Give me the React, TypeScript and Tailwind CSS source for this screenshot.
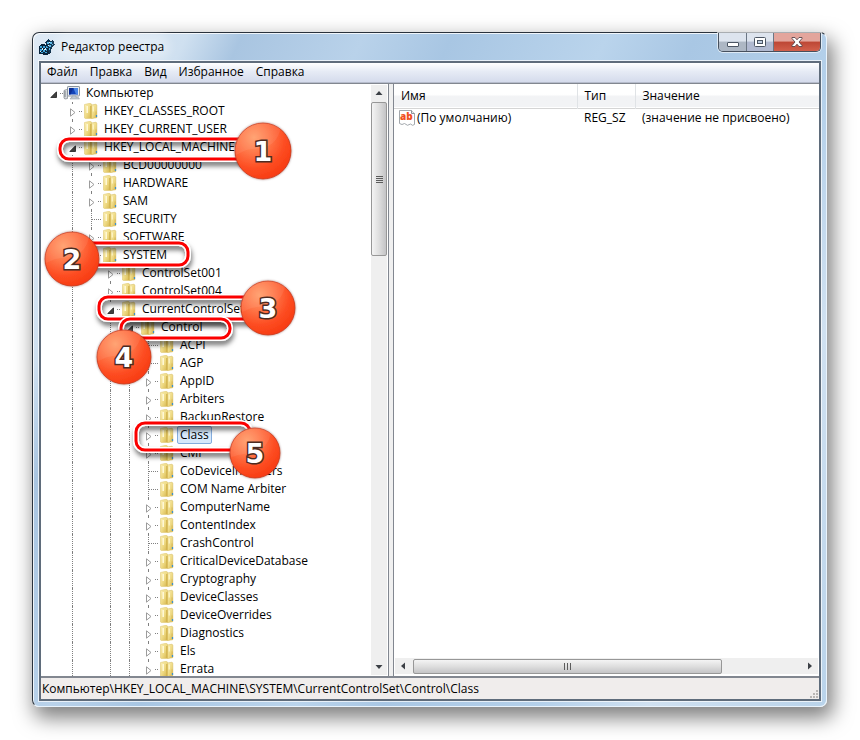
import { useState } from "react";
import clsx from "clsx";

type NodeState = "open" | "closed" | "leaf";

interface TreeNode {
  name: string;
  depth: number;
  state: NodeState;
}

const MENU = ["Файл", "Правка", "Вид", "Избранное", "Справка"];

// branches that still have siblings further down the tree, by depth
const GUIDES = [false, true, false, true, true];

const node = (depth: number, name: string, state: NodeState = "closed"): TreeNode => ({ depth, name, state });

const NODES: TreeNode[] = [
  node(0, "Компьютер", "open"),
  node(1, "HKEY_CLASSES_ROOT"),
  node(1, "HKEY_CURRENT_USER"),
  node(1, "HKEY_LOCAL_MACHINE", "open"),
  node(2, "BCD00000000"),
  node(2, "HARDWARE"),
  node(2, "SAM"),
  node(2, "SECURITY", "leaf"),
  node(2, "SOFTWARE"),
  node(2, "SYSTEM", "open"),
  node(3, "ControlSet001"),
  node(3, "ControlSet004"),
  node(3, "CurrentControlSet", "open"),
  node(4, "Control", "open"),
  node(5, "ACPI", "leaf"),
  node(5, "AGP", "leaf"),
  node(5, "AppID"),
  node(5, "Arbiters"),
  node(5, "BackupRestore"),
  node(5, "Class"),
  node(5, "CMF"),
  node(5, "CoDeviceInstallers", "leaf"),
  node(5, "COM Name Arbiter", "leaf"),
  node(5, "ComputerName"),
  node(5, "ContentIndex"),
  node(5, "CrashControl", "leaf"),
  node(5, "CriticalDeviceDatabase"),
  node(5, "Cryptography"),
  node(5, "DeviceClasses"),
  node(5, "DeviceOverrides"),
  node(5, "Diagnostics"),
  node(5, "Els"),
  node(5, "Errata"),
];

function RegeditIcon() {
  return (
    <svg width="16" height="16" viewBox="0 0 16 16" shapeRendering="crispEdges" aria-hidden="true">
      <path d="M0 7l3-2 6 1 3 2v6l-4 2-8-1z" fill="#08243c" />
      <path d="M1 7h2v2H1zM4 7h2v2H4zM7 7h2v2H7zM1 10h2v2H1zM4 11h2v2H4zM2 13h2v1H2zM6 13h2v1H6zM7 10h1v2H7z" fill="#3fa3d8" />
      <path d="M3 9h1v2H3zM6 9h1v2H6zM1 12h1v1H1zM5 10h1v1H5z" fill="#d6f1ff" />
      <path d="M6 3l4-3 1 2 3-1 1 2 1 3-3 2-1 4-2 2-1-5z" fill="#0b2f4d" />
      <path d="M8 3h2v2H8zM11 3h2v2h-2zM10 6h2v2h-2zM13 5h1v1h-1zM10 9h1v2h-1z" fill="#58b7e6" />
      <path d="M10 3h1v1h-1zM9 6h1v1H9z" fill="#e6f8ff" />
    </svg>
  );
}

function ComputerIcon() {
  return (
    <svg width="18" height="16" viewBox="0 0 18 16" className="-ml-px shrink-0" aria-hidden="true">
      <path d="M1 5.500l2.500-1 1 .5v8.500L2 14l-1-.8z" fill="#d7dadd" stroke="#7c8288" strokeWidth=".7" />
      <path d="M2 6v6" stroke="#7c8288" />
      <rect x="4.500" y="1.500" width="12" height="9.500" rx=".6" fill="#e8ecf0" stroke="#8c959e" />
      <rect x="6" y="3" width="9" height="6.500" fill="#1244b8" />
      <path d="M10.500 3H15v6.500h-2z" fill="#4a86e6" />
      <path d="M6 3h4.500L7.500 9.500H6z" fill="#0c2f96" />
      <path d="M9 11h4v1.500h2.500l1 1.500H7l1-1.500h1z" fill="#c3cbd2" stroke="#8b949d" strokeWidth=".5" />
    </svg>
  );
}

function FolderIcon() {
  return (
    <svg width="16" height="16" viewBox="0 0 16 16" className="shrink-0" aria-hidden="true">
      <defs>
        <linearGradient id="folder" x1="0" y1="0" x2="1" y2="1">
          <stop offset="0" stopColor="#fbf0b5" />
          <stop offset=".55" stopColor="#eed982" />
          <stop offset="1" stopColor="#d4b44c" />
        </linearGradient>
      </defs>
      <path d="M1.500 1.500L7 .3l1.500.7v14.500L2.200 15.500l-.7-.6z" fill="url(#folder)" stroke="#e0c976" strokeWidth=".6" />
      <path d="M8.500 2l4.500-.8.8.8v12.500l-5.300 1.200z" fill="url(#folder)" stroke="#d8bf66" strokeWidth=".6" />
      <path d="M7.200 3h1.300v12H7.200z" fill="#d3b34c" />
      <path d="M4.200 3v7" stroke="#fff9da" strokeWidth="1.500" />
      <path d="M10.300 3.500v5" stroke="#fdf4c8" strokeWidth="1.200" />
      <path d="M12.500 8.500h1.500V15l-1.500.3z" fill="#dcc062" />
      <path d="M13.500 12v2" stroke="#3a8fd0" strokeWidth="1.200" />
    </svg>
  );
}

function StringIcon() {
  return (
    <svg width="16" height="16" viewBox="0 0 16 16" className="shrink-0" aria-hidden="true">
      <path d="M.5.5h12l3 3v11l-2 .8-2-1.300-3 1.300-3-1.800-2.500 1-2.500-1z" fill="#fff" stroke="#a3a8ad" />
      <path d="M12.500.5v3h3" fill="#e6e8ea" stroke="#8d9399" />
      <text x="1" y="10" fontFamily="Open Sans, sans-serif" fontWeight="800" fontSize="10" fill="#f0501e">
        ab
      </text>
    </svg>
  );
}

function Expander({ state }: { state: NodeState }) {
  if (state === "open") {
    return (
      <svg width="7" height="7" viewBox="0 0 7 7" aria-hidden="true">
        <path d="M6.500.8v5.700H.8z" fill="#404040" stroke="#1e1e1e" strokeWidth=".8" />
      </svg>
    );
  }
  return (
    <svg width="6" height="9" viewBox="0 0 6 9" aria-hidden="true">
      <path d="M.5.8v7.400L5 4.500z" fill="#fff" stroke="#9c9c9c" />
    </svg>
  );
}

function TreeRow({ item, selected, onSelect }: { item: TreeNode; selected: boolean; onSelect: () => void }) {
  const { depth, name, state } = item;
  return (
    <li role="treeitem" aria-selected={selected} className="flex h-[18px] items-center">
      {GUIDES.slice(0, depth).map((line, i) => (
        <span key={i} className="flex h-full w-[19px] shrink-0 justify-center">
          {line && <span className="border-l border-dotted border-[#808080]" />}
        </span>
      ))}
      <span className="relative flex h-full w-[19px] shrink-0 items-center justify-center">
        {depth > 0 && <span className="absolute inset-y-0 left-[9px] border-l border-dotted border-[#808080]" />}
        <span className="absolute right-0 left-[10px] top-[9px] border-t border-dotted border-[#808080]" />
        {state !== "leaf" && (
          <button
            type="button"
            aria-label={name}
            className="relative flex h-[15px] w-[11px] items-center justify-center bg-white pt-0.5"
          >
            <Expander state={state} />
          </button>
        )}
      </span>
      <button
        type="button"
        onClick={onSelect}
        className="flex h-[18px] items-center whitespace-nowrap pl-px"
      >
        {depth === 0 ? <ComputerIcon /> : <FolderIcon />}
        <span
          className={clsx(
            "ml-0.5 rounded-xs border px-0.5 leading-4",
            selected ? "border-[#84acdd] bg-[#d6e8fb]" : "border-transparent"
          )}
        >
          {name}
        </span>
      </button>
    </li>
  );
}

function ScrollArrow({ direction }: { direction: "up" | "down" | "left" | "right" }) {
  const paths = {
    up: "M0.500 6L4 2l3.500 4z",
    down: "M0.500 2L4 6l3.500-4z",
    left: "M6 .5L2 4l4 3.500z",
    right: "M2 .5L6 4 2 7.500z",
  };
  return (
    <button type="button" aria-label={direction} className="flex size-4 shrink-0 items-center justify-center">
      <svg width="8" height="8" viewBox="0 0 8 8" aria-hidden="true">
        <path d={paths[direction]} fill="#3c4046" />
      </svg>
    </button>
  );
}

function RegistryTree() {
  const [selected, setSelected] = useState("Class");
  return (
    <div className="flex w-[348px] shrink-0 overflow-hidden border-r border-[#828790] bg-white">
      <ul role="tree" className="min-w-0 flex-1 overflow-hidden pl-[3px]">
        {NODES.map((n) => (
          <TreeRow key={n.name} item={n} selected={n.name === selected} onSelect={() => setSelected(n.name)} />
        ))}
      </ul>
      <div className="my-px mr-px flex w-4 flex-col bg-[#efefef]">
        <ScrollArrow direction="up" />
        <div className="mt-px flex h-[154px] flex-col items-center justify-center gap-px rounded-xs border border-[#979797] bg-linear-to-r from-[#f4f4f4] via-[#dedede] to-[#c4c4c6]">
          <span className="h-px w-[7px] bg-[#5c5c5c]" />
          <span className="h-px w-[7px] bg-[#5c5c5c]" />
          <span className="h-px w-[7px] bg-[#5c5c5c]" />
          <span className="h-px w-[7px] bg-[#5c5c5c]" />
        </div>
        <div className="mt-auto">
          <ScrollArrow direction="down" />
        </div>
      </div>
    </div>
  );
}

function Values() {
  return (
    <div className="flex min-w-0 flex-1 flex-col border-l border-[#828790] bg-white">
      <table className="w-full table-fixed text-left">
        <colgroup>
          <col className="w-[183px]" />
          <col className="w-[58px]" />
          <col />
        </colgroup>
        <thead>
          <tr className="h-6 border-b border-[#d5d5d5] bg-linear-to-b from-white from-45% to-[#f2f3f5] to-55%">
            <th className="border-r border-[#e0e3e6] pl-[7px] font-normal">Имя</th>
            <th className="border-r border-[#e0e3e6] pl-[7px] font-normal">Тип</th>
            <th className="pl-[7px] font-normal">Значение</th>
          </tr>
        </thead>
        <tbody>
          <tr className="h-5">
            <td className="pl-[5px]">
              <span className="flex items-center gap-0.5">
                <StringIcon />
                (По умолчанию)
              </span>
            </td>
            <td className="pl-[7px]">REG_SZ</td>
            <td className="pl-[7px]">(значение не присвоено)</td>
          </tr>
        </tbody>
      </table>
      <div className="mx-px mt-auto mb-0.5 flex h-4 items-center bg-[#efefef]">
        <ScrollArrow direction="left" />
        <div className="ml-0.5 flex h-[15px] w-[73%] items-center justify-center gap-0.5 rounded-xs border border-[#979797] bg-linear-to-b from-[#f4f4f4] via-[#dedede] to-[#c4c4c6]">
          <span className="h-[7px] w-px bg-[#5c5c5c]" />
          <span className="h-[7px] w-px bg-[#5c5c5c]" />
          <span className="h-[7px] w-px bg-[#5c5c5c]" />
        </div>
        <div className="ml-auto">
          <ScrollArrow direction="right" />
        </div>
      </div>
    </div>
  );
}

function TitleBar() {
  return (
    <header className="flex h-7 shrink-0 items-start justify-between">
      <div className="flex h-7 items-center gap-1.5">
        <RegeditIcon />
        <h1 className="rounded-full bg-white/30 shadow-[0_0_10px_6px_rgba(255,255,255,0.3)]">Редактор реестра</h1>
      </div>
      <div className="flex h-[19px] overflow-hidden rounded-b-[5px] border border-t-0 border-[#46505e] shadow-[0_0_0_1px_rgba(255,255,255,0.6)]">
        <button
          type="button"
          aria-label="Свернуть"
          className="flex w-7 items-end justify-center border-r border-[#6b7684] bg-linear-to-b from-[#dde4ee] from-45% to-[#adb7c4] to-50% pb-1"
        >
          <span className="h-[5px] w-3 rounded-[1px] border border-[#4b5563] bg-white" />
        </button>
        <button
          type="button"
          aria-label="Развернуть"
          className="flex w-[27px] items-center justify-center border-r border-[#6b7684] bg-linear-to-b from-[#dde4ee] from-45% to-[#b0b9d0] to-50%"
        >
          <svg width="12" height="10" viewBox="0 0 12 10" aria-hidden="true">
            <rect x=".5" y=".5" width="11" height="9" rx="1" fill="#fff" stroke="#4b5563" />
            <rect x="3.500" y="3.500" width="5" height="3" fill="#bccadd" stroke="#4b5563" />
          </svg>
        </button>
        <button
          type="button"
          aria-label="Закрыть"
          className="flex w-[46px] items-center justify-center bg-linear-to-b from-[#e3a59c] from-45% via-[#bd4735] via-50% to-[#d2604c]"
        >
          <svg width="12" height="10" viewBox="0 0 12 10" aria-hidden="true">
            <path
              d="M1 .5h3l2 2.300L8 .5h3v1L8 5l3 3.500v1H8L6 7.200 4 9.500H1v-1L4 5 1 1.500z"
              fill="#fff"
              stroke="#59434a"
              strokeWidth=".9"
            />
          </svg>
        </button>
      </div>
    </header>
  );
}

interface Step {
  label: string;
  cx: number;
  cy: number;
  r: number;
  box: [number, number, number, number];
}

const STEPS: Step[] = [
  { label: "1", cx: 263, cy: 151, r: 28, box: [60, 139, 200, 20] },
  { label: "2", cx: 72, cy: 259, r: 27, box: [70, 243, 118, 22] },
  { label: "3", cx: 268, cy: 308, r: 27, box: [99, 297, 160, 22] },
  { label: "4", cx: 124, cy: 357, r: 27, box: [121, 319, 109, 19] },
  { label: "5", cx: 255, cy: 453, r: 25, box: [136, 423, 114, 27] },
];

function Steps() {
  return (
    <svg width="340" height="500" viewBox="0 0 340 500" className="pointer-events-none absolute top-0 left-0">
      <defs>
        <radialGradient id="ball" cx=".34" cy=".26" r=".85">
          <stop offset="0" stopColor="#ff9d6a" />
          <stop offset=".3" stopColor="#ff7a4c" />
          <stop offset=".65" stopColor="#fd4d22" />
          <stop offset="1" stopColor="#f5350c" />
        </radialGradient>
        <filter id="frameShadow" x="-10%" y="-50%" width="120%" height="220%">
          <feDropShadow dx="1" dy="4" stdDeviation="2.500" floodColor="#000" floodOpacity=".55" />
        </filter>
        <filter id="ballShadow" x="-20%" y="-20%" width="140%" height="140%">
          <feDropShadow dx="0" dy="0" stdDeviation="1" floodColor="#400" floodOpacity=".5" />
        </filter>
      </defs>
      {STEPS.map(({ label, box: [x, y, width, height] }) => (
        <g key={label} fill="none" filter="url(#frameShadow)">
          <rect x={x} y={y} width={width} height={height} rx="9" stroke="#fff" strokeWidth="6" />
          <rect x={x} y={y} width={width} height={height} rx="9" stroke="#fb0000" strokeWidth="3" />
        </g>
      ))}
      {STEPS.map(({ label, cx, cy, r }) => (
        <g key={label}>
          <circle cx={cx} cy={cy} r={r} fill="url(#ball)" stroke="#c9391c" strokeWidth=".8" filter="url(#ballShadow)" />
          <path
            d={`M${cx - r + 1} ${cy + 4}a${r - 1} ${r - 1} 0 0 1 ${r * 1.6} ${-r + 1}q-4 18 -20 20t-${r * 0.6} 3z`}
            fill="#fff"
            opacity=".07"
          />
          <text
            x={cx}
            y={cy + 10}
            textAnchor="middle"
            fontFamily="DejaVu Sans, sans-serif"
            fontWeight="700"
            fontSize="27"
            fill="#fff"
            stroke="#4d2b22"
            strokeWidth="3"
            paintOrder="stroke"
          >
            {label}
          </text>
        </g>
      ))}
    </svg>
  );
}

export default function App() {
  return (
    <div className="relative h-screen min-h-[400px] bg-white p-8 pb-[33px] pr-[33px] font-['Open_Sans','Noto_Sans',sans-serif] text-[12px] leading-4 text-black">
      <main className="flex h-full flex-col rounded-[7px] border border-[#2a323c] border-r-[#e9f3fc] border-b-[#e9f3fc] bg-[linear-gradient(115deg,#dfeaf5_0%,#cfe0f0_14%,#a9c5e1_19%,#b9d2ea_30%,#a8c6e3_38%,#bad4ec_52%,#a9c7e4_60%,#b4d0ea_74%,#d0e1f1_84%,#b9d3ea_100%)] pr-[5px] pb-[5px] pl-1.5 shadow-[4px_9px_20px_2px_rgba(0,0,0,0.5),inset_1px_1px_0_0_rgba(255,255,255,0.8)]">
        <TitleBar />
        <div className="flex min-h-0 flex-1 flex-col border-2 border-[#5f6c7b] bg-white outline outline-white/70">
          <nav className="flex h-5 shrink-0 items-center border-b border-[#b6bccc] bg-linear-to-b from-white via-[#e6ebf5] via-45% to-[#d5dbec] pb-px">
            {MENU.map((item) => (
              <button key={item} type="button" className="px-1.5 whitespace-nowrap">
                {item}
              </button>
            ))}
          </nav>
          <div className="flex min-h-0 flex-1 gap-1 border-y border-[#828790] bg-[#f0f0f0]">
            <RegistryTree />
            <Values />
          </div>
          <footer className="flex h-[22px] shrink-0 items-center justify-between border-t border-[#828790] bg-[#f0edec] pt-px pl-px">
            <span className="truncate">Компьютер\HKEY_LOCAL_MACHINE\SYSTEM\CurrentControlSet\Control\Class</span>
            <svg width="10" height="10" viewBox="0 0 10 10" className="self-end" fill="#b9b6b4" aria-hidden="true">
              <path d="M7 1h2v2H7zM4 4h2v2H4zM7 4h2v2H7zM1 7h2v2H1zM4 7h2v2H4zM7 7h2v2H7z" />
            </svg>
          </footer>
        </div>
      </main>
      <Steps />
    </div>
  );
}
